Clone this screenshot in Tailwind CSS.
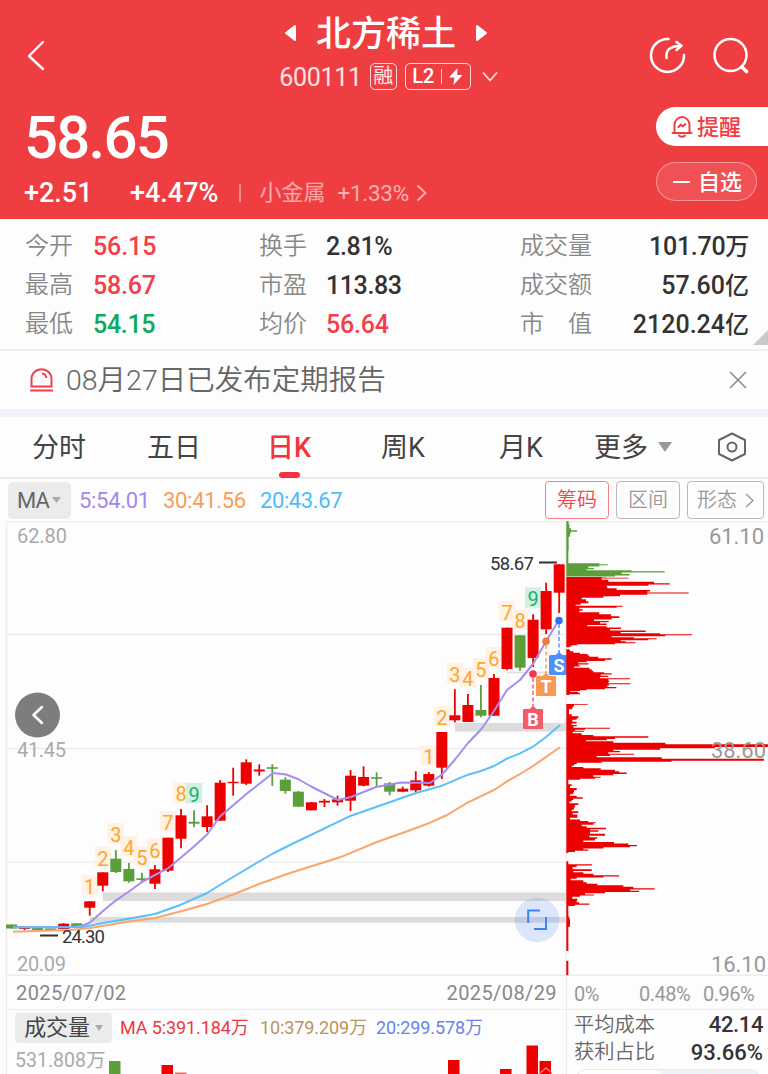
<!DOCTYPE html>
<html lang="zh-CN">
<head>
  <meta charset="utf-8" />
  <meta name="viewport" content="width=device-width, initial-scale=1" />
  <title>北方稀土 600111</title>
  <script src="https://cdn.jsdelivr.net/npm/@tailwindcss/browser@4"></script>
</head>
<body class="w-[768px] h-[1074px] overflow-hidden bg-[#fdfdfd] font-['Roboto','Noto_Sans_CJK_SC',sans-serif] text-[#333]">

  <!-- Header -->
  <header class="h-[219px] bg-[#ef3e41] text-white flex flex-col">
    <div class="h-[104px] flex">
      <div class="w-[220px] pl-[27px] pt-[40px]">
        <svg width="18" height="32" viewBox="0 0 18 32" fill="none" stroke="#fff" stroke-width="2.4" stroke-linecap="round" stroke-linejoin="round"><path d="M16 2 2 16l14 13"/></svg>
      </div>
      <div class="w-[332px] flex flex-col items-center">
        <div class="h-[66px] flex items-center gap-[19px]">
          <svg width="13" height="18" viewBox="0 0 13 18" fill="#fff" stroke="#fff" stroke-width="2" stroke-linejoin="round"><path d="M11 2v14L2 9z"/></svg>
          <h1 class="text-[35px] leading-none font-medium pt-[3px]">北方稀土</h1>
          <svg width="13" height="18" viewBox="0 0 13 18" fill="#fff" stroke="#fff" stroke-width="2" stroke-linejoin="round"><path d="M2 2v14l9-7z"/></svg>
        </div>
        <div class="h-[20px] flex items-center gap-2 ml-[5px]">
          <span class="text-[25px] leading-none text-white/85 tracking-[-0.3px] pt-[2px]">600111</span>
          <span class="w-[27px] h-[27px] border-[1.5px] border-white/80 rounded-[5px] flex items-center justify-center text-[20px] leading-none text-white/90">融</span>
          <span class="w-[66px] h-[27px] border-[1.5px] border-white/80 rounded-[5px] flex items-center justify-center gap-[7px] text-[20px] leading-none font-medium">L2
            <i class="w-px h-[15px] bg-white/70"></i>
            <svg width="14" height="17" viewBox="0 0 14 17" fill="#fff"><path d="M8.500 0 0 9.500h5.300L4.500 17 13.500 7H8.200z"/></svg>
          </span>
          <svg class="ml-[3px]" width="16" height="11" viewBox="0 0 16 11" fill="none" stroke="#fff" stroke-opacity=".85" stroke-width="1.600"><path d="m1 1.500 7 8 7-8"/></svg>
        </div>
      </div>
      <div class="flex-1 flex pt-[36px] pl-[97px] gap-[27px]">
        <svg width="37" height="38" viewBox="0 0 37 38" fill="none" stroke="#fff" stroke-width="2.500" stroke-linecap="round" stroke-linejoin="round"><path d="M19.500 3A16.500 16.500 0 1 0 35 19M17.500 22c-.8-8 3-11.500 13-12M27.500 6l5 3.800-5 4.200"/></svg>
        <svg width="38" height="39" viewBox="0 0 38 39" fill="none" stroke="#fff" stroke-width="2.500" stroke-linecap="round"><circle cx="17.500" cy="19" r="16"/><path d="m29 31 4.500 4.500" stroke-width="3.600"/></svg>
      </div>
    </div>
    <div class="flex-1 flex justify-between">
      <div class="pl-[24px]">
        <div class="mt-[3px] h-[62px] flex items-center text-[60px] leading-none font-medium tracking-[-1.800px]">58.65</div>
        <div class="mt-[9px] h-[30px] flex items-center text-[27px] leading-none font-medium">
          <span class="w-[106px]">+2.51</span>
          <span class="w-[109px]">+4.47%</span>
          <i class="w-[1.500px] h-[18px] bg-white/40 mr-[19px]"></i>
          <span class="text-[22px] font-normal text-white/55">小金属</span>
          <span class="text-[22.500px] ml-[12px] font-normal tracking-[-0.300px] text-white/60">+1.33%</span>
          <svg class="ml-[7px]" width="11" height="18" viewBox="0 0 11 18" fill="none" stroke="#fff" stroke-opacity=".6" stroke-width="1.800"><path d="m1.500 1.500 8 7.500-8 7.500"/></svg>
        </div>
      </div>
      <div class="w-[112px] pt-[3px] flex flex-col gap-[16px]">
        <div class="h-[39px] rounded-l-full bg-white text-[#f23c44] flex items-center pl-[15px] gap-[4px] text-[22px] leading-none font-medium">
          <svg width="22" height="23" viewBox="0 0 22 23" fill="none" stroke="#f23c44" stroke-width="1.900" stroke-linecap="round" stroke-linejoin="round"><path d="M3.500 17.500V10a7.500 8 0 0 1 15 0v7.500M1.500 18h19M8 20.500c1.500 1.700 4.500 1.700 6 0M7.500 12l2.500-2.500 1.500 2L14.500 9"/></svg>
          <span class="pt-[2px]">提醒</span>
        </div>
        <div class="w-[101px] h-[39px] rounded-full border-[1.500px] border-white/40 bg-white/10 flex items-center pl-[16px] gap-[8px] text-[22px] leading-none font-medium">
          <i class="w-[17px] h-[2px] bg-white"></i><span class="pt-[2px]">自选</span>
        </div>
      </div>
    </div>
  </header>

  <!-- Quote figures -->
  <section class="relative h-[132px] border-b-2 border-[#efeff0] pt-[8px] pl-[25px] pr-[19px] text-[24px] leading-none">
    <div class="grid grid-cols-[68px_166px_67px_194px_72px_1fr] auto-rows-[39px] items-center font-medium">
      <span class="font-[350] text-[#888] pb-[2px]">今开</span><span class="text-[25px] text-[#f63d49] tracking-[-0.100px]">56.15</span>
      <span class="font-[350] text-[#888] pb-[2px]">换手</span><span class="text-[25px] tracking-[-0.300px]">2.81%</span>
      <span class="font-[350] text-[#888] pb-[2px]">成交量</span><span class="text-[25px] text-right tracking-[-0.300px]">101.70<span class="text-[24px]">万</span></span>
      <span class="font-[350] text-[#888] pb-[2px]">最高</span><span class="text-[25px] text-[#f63d49] tracking-[-0.200px]">58.67</span>
      <span class="font-[350] text-[#888] pb-[2px]">市盈</span><span class="text-[25px] tracking-[-0.400px]">113.83</span>
      <span class="font-[350] text-[#888] pb-[2px]">成交额</span><span class="text-[25px] text-right">57.60<span class="text-[24px]">亿</span></span>
      <span class="font-[350] text-[#888] pb-[2px]">最低</span><span class="text-[25px] text-[#0aab5c] tracking-[-0.300px]">54.15</span>
      <span class="font-[350] text-[#888] pb-[2px]">均价</span><span class="text-[25px] text-[#f63d49] tracking-[-0.200px]">56.64</span>
      <span class="font-[350] text-[#888] pb-[2px] flex justify-between"><span>市</span><span>值</span></span><span class="text-[25px] text-right">2120.24<span class="text-[24px]">亿</span></span>
    </div>
    <svg class="absolute right-0 bottom-[4px]" width="15" height="15" viewBox="0 0 15 15" fill="#c9c9c9"><path d="M15 0v15H0z"/></svg>
  </section>

  <!-- Notice -->
  <section class="h-[66px] border-b-[8px] border-[#f1f2f8] flex items-center pl-[30px] pr-[21px]">
    <svg width="23" height="24" viewBox="0 0 23 24" fill="none" stroke="#f4404c" stroke-width="2"><path d="M1.500 18.500V11a10 9.800 0 0 1 20 0v7.500zM0 22.500h23M12 5.500c2.500.3 4 2 4.300 4.500"/></svg>
    <span class="ml-[13px] pt-[3px] text-[28.500px] leading-none text-[#666] font-[350]">08月27日已发布定期报告</span>
    <svg class="ml-auto" width="18" height="18" viewBox="0 0 18 18" stroke="#888" stroke-width="1.500"><path d="m1 1 16 16M17 1 1 17"/></svg>
  </section>

  <!-- Period tabs -->
  <nav class="h-[62px] border-b-2 border-[#ececee] flex items-center text-[27px] leading-none text-[#444]">
    <span class="w-[115px] pl-[32px] pt-[3px]">分时</span>
    <span class="w-[120px] pl-[32px] pt-[3px]">五日</span>
    <span class="w-[146px] pl-[32px] pt-[3px] relative font-medium text-[#f5333f]">日K<i class="absolute left-[44px] top-[40px] w-[21px] h-[6px] rounded-full bg-[#f5333f]"></i></span>
    <span class="w-[118px] pt-[3px]">周K</span>
    <span class="w-[95px] pt-[3px]">月K</span>
    <span class="pt-[3px]">更多</span>
    <svg class="ml-[10px]" width="14" height="10" viewBox="0 0 14 10" fill="#999"><path d="M0 0h14L7 10z"/></svg>
    <svg class="ml-[45px]" width="30" height="30" viewBox="0 0 30 30" fill="none" stroke="#666" stroke-width="2" stroke-linejoin="round"><path d="M15 1.500 28 8v14l-13 6.500L2 22V8z"/><circle cx="15" cy="15" r="4.500"/></svg>
  </nav>

  <!-- Indicator bar -->
  <div class="h-[42px] flex items-center pl-[8px] pr-[4px] text-[22px] leading-none">
    <span class="w-[63px] h-[37px] rounded-[5px] bg-[#ebebeb] text-[#666] flex items-center pl-[9px] gap-[2px]"><span class="w-[33px] pt-[2px] tracking-[-0.800px]">MA</span><svg width="9" height="6" viewBox="0 0 9 6" fill="#aaa"><path d="M0 0h9L4.500 6z"/></svg></span>
    <span class="w-[84px] ml-[8px] pt-[1px] text-[#a487ee] tracking-[-0.300px]">5:54.01</span>
    <span class="w-[97px] pt-[1px] text-[#f99d5c] tracking-[-0.300px]">30:41.56</span>
    <span class="text-[#4fbcf8] pt-[1px] tracking-[-0.400px]">20:43.67</span>
    <div class="ml-auto flex gap-[7px] text-[20px] font-[350]">
      <span class="w-[64px] h-[38px] rounded-[4px] border-[1.500px] border-[#f77f88] text-[#f5434f] flex items-center justify-center">筹码</span>
      <span class="w-[64px] h-[38px] rounded-[4px] border-[1.500px] border-[#bbb] text-[#999] flex items-center justify-center">区间</span>
      <span class="w-[77px] h-[38px] rounded-[4px] border-[1.500px] border-[#bbb] text-[#999] flex items-center justify-center gap-[8px]">形态<svg width="9" height="15" viewBox="0 0 9 15" fill="none" stroke="#999" stroke-width="1.500"><path d="m1 1 7 6.500L1 14"/></svg></span>
    </div>
  </div>

  <!-- K line chart and chip distribution -->
  <svg id="chart" class="block" width="768" height="455" viewBox="0 521 768 455">
    <g stroke="#ededee" stroke-width="1.500">
      <path d="M6 521.800H768M6 634.500H567M6 748.500H567M6 862H567M6 975.200H768M6.500 521V976M566 521V976"/>
      <path d="M507 672.500H566" stroke="#dedede"/>
    </g>
    <g fill="#dcdcdc">
      <rect x="455" y="723" width="111" height="8.500"/>
      <rect x="103" y="892.500" width="463" height="8.500"/>
      <rect x="90" y="917" width="476" height="5.800"/>
    </g>
    <g font-size="20" fill="#aaa">
      <text x="17" y="542.500" textLength="50">62.80</text>
      <text x="17" y="756.500" textLength="49">41.45</text>
      <text x="17" y="970.500" textLength="49">20.09</text>
    </g>
    <g id="counts" font-size="20" text-anchor="middle"></g>
    <g id="candles" stroke-width="1.800"></g>
    <g fill="none" stroke-width="2" stroke-linejoin="round">
      <path stroke="#f9a56c" d="M13 931.700 70 930 90 928 129 921.500 155 918 181 911.300 207 904 233 894.500 259 884 290 873 340 857.300 377 842 410 830.300 430 822.700 447 815 468 802.300 494 790 507 781.300 520 774 533 766 560 747.300"/>
      <path stroke="#a78bee" d="M13 927 70 927.300 83 925.500 90 922.500 103 911 116 900.300 129 891.500 142 882 155 875 168 868.300 181 857.500 194 846.500 207 834.500 220 816.500 247 793.500 273 773 286 774.500 298 779 312 787 338 800 351 797 376 787 401 782.500 430 783 442 774.500 455 759.500 468 743 481 729.500 494 711 507 690 520 680 533 664 546 641.500 559 620"/>
      <path stroke="#5bc0f8" d="M13 927.500 83 927 103 923 130 918.500 155 914 181 904.700 207 893 233 877 260 861 273 853.500 290 845 351 815.700 416 793 442 785.700 468 774.700 481 771 494 766 507 758.700 520 753.300 533 746.700 546 737 560 725"/>
    </g>
    <g font-size="18.500" fill="#333">
      <text x="490" y="569.500" textLength="44">58.67</text>
      <text x="62" y="943" textLength="43">24.30</text>
      <path d="M539 562.500h18M40 935.500h18" stroke="#333" stroke-width="1.800"/>
    </g>

    <!-- buy / T / sell markers -->
    <g stroke-width="1.500" stroke-dasharray="4 2.500">
      <path d="M533 678v30" stroke="#ef6471"/><path d="M546 645v30" stroke="#f9a05a"/><path d="M559 624v30" stroke="#5794fa"/>
    </g>
    <circle cx="533" cy="674" r="3.800" fill="#f0384a"/>
    <circle cx="546" cy="641.300" r="3.800" fill="#ef7b3f"/>
    <circle cx="559" cy="620.500" r="3.800" fill="#2d73f5"/>
    <g font-size="18" font-weight="700" text-anchor="middle">
      <path fill="#4d8ffb" d="M550 655h5.500l3.500-3 3.500 3h6.500v20h-19a1 1 0 0 1-1-1v-18z"/>
      <text x="559" y="671.500" fill="#fff">S</text>
      <path fill="#fb984f" d="M537 676h5.500l3.500-3 3.500 3h5.500a1 1 0 0 1 1 1v18a1 1 0 0 1-1 1h-18a1 1 0 0 1-1-1v-18z"/>
      <text x="546" y="692.500" fill="#fff">T</text>
      <path fill="#f45b68" d="M524 709h5.500l3.500-3 3.500 3h5.500a1 1 0 0 1 1 1v18a1 1 0 0 1-1 1h-18a1 1 0 0 1-1-1v-18z"/>
      <text x="533" y="725.500" fill="#fff">B</text>
    </g>

    <g transform="translate(560 520) scale(.33333)">
      <path id="chipGreen" fill="#5b9e3a"/>
      <path id="chipRed" fill="#ec0000"/>
    </g>
    <g font-size="22" fill="#999">
      <text x="709" y="543.500" textLength="55">61.10</text>
      <text x="711" y="757.500" textLength="55">38.60</text>
      <text x="711" y="972" textLength="55">16.10</text>
    </g>

    <circle cx="37.500" cy="715" r="22.500" fill="#7d7d7d"/>
    <path d="m42 707-8.500 8 8.500 8" fill="none" stroke="#fff" stroke-width="2.500" stroke-linecap="round" stroke-linejoin="round"/>
    <circle cx="537" cy="920" r="22.300" fill="#4a7df0" fill-opacity=".18"/>
    <path d="M528.200 923v-12.500H540M534 929h12v-12" fill="none" stroke="#3b82f6" stroke-width="2"/>
  </svg>

  <!-- Date axis -->
  <div class="h-[34px] flex ml-[6px] border-l border-b-[1.500px] border-[#ececec] leading-none">
    <div class="w-[560px] pl-[9px] pr-[9px] pt-[1px] flex items-center justify-between text-[20px] text-[#888] border-r-[1.500px] border-[#ececec]">
      <span class="tracking-[0.400px]">2025/07/02</span><span class="tracking-[0.400px]">2025/08/29</span>
    </div>
    <div class="flex-1 flex items-center pl-[7px] pt-[2px] text-[20px] text-[#999]">
      <span class="w-[65px] tracking-[-0.500px]">0%</span><span class="w-[64px] tracking-[-0.500px]">0.48%</span><span class="tracking-[-0.500px]">0.96%</span>
    </div>
  </div>

  <!-- Volume and chip cost -->
  <div class="h-[64px] flex ml-[6px] border-l border-[#ececec] leading-none">
    <div class="relative w-[560px] border-r-[1.500px] border-[#ececec] pt-[3px] pl-[8px]">
      <div class="flex items-center text-[18px] tracking-[-0.100px] whitespace-nowrap">
        <span class="w-[97px] h-[30px] rounded-[4px] bg-[#ebebeb] flex items-center justify-center gap-[5px] text-[22px] text-[#444]">成交量<svg width="8" height="6" viewBox="0 0 8 6" fill="#aaa"><path d="M0 0h8L4 6z"/></svg></span>
        <span class="w-[140px] ml-[8px] text-[#ea3a3e]">MA 5:391.184万</span>
        <span class="w-[116px] text-[#b8955c]">10:379.209万</span>
        <span class="text-[#6a83e8]">20:299.578万</span>
      </div>
      <div class="mt-[8px] text-[19.500px] text-[#aaa]">531.808万</div>
      <svg class="absolute left-0 top-0" width="560" height="64" viewBox="7 1010 560 64">
        <path fill="#5b9e3a" d="M109 1061h11.500v13H109z"/>
        <path fill="#ec0000" d="M161.500 1065H173v9h-11.500zM448 1060h11.500v14H448zM500 1069h11.500v5H500zM526.500 1045.500H538V1074h-11.500zM539.500 1061H551v13h-11.500z"/>
        <path fill="#f06a6a" d="M175 1072.500h11.500v1.500H175z"/>
        <path fill="none" stroke="#f77" stroke-width="1.500" d="m540 1073 6-5 6 5"/>
      </svg>
    </div>
    <div class="flex-1 relative pl-[7px] pr-[5px] pt-[1px] text-[20.300px] text-[#666]">
      <div class="h-[28px] flex items-center justify-between"><span class="font-[350]">平均成本</span><span class="text-[22px] font-medium text-[#333] tracking-[-0.400px]">42.14</span></div>
      <div class="h-[27px] flex items-center justify-between"><span class="font-[350]">获利占比</span><span class="text-[22px] font-medium text-[#333]">93.66%</span></div>
      <div class="mt-[3px] h-[5px] overflow-hidden"><div class="ml-[2px] mr-[3px] h-[24px] rounded-[10px] bg-[#eef3f9] border border-[#e3e9f1]"><div class="w-[86px] h-full rounded-[10px] bg-white"></div></div></div>
    </div>
  </div>

  <script>
    const RED = '#ec0000', GREEN = '#5b9e3a';
    const NS = 'http://www.w3.org/2000/svg';

    function add(parent, tag, attrs, text) {
      const el = document.createElementNS(NS, tag);
      for (const k in attrs) el.setAttribute(k, attrs[k]);
      if (text) el.textContent = text;
      parent.appendChild(el);
    }

    // colour, body top, body bottom, wick top, wick bottom
    const candles = [
      ['g',924.5,928.5,924.5,928.5],['r',927.5,929,927,930.3],['g',928,930,928,930],['g',928.5,930,928.5,930],
      ['r',923.7,929,923,929],['g',923.3,926,923.3,926],['r',901.3,907.7,901.3,915.7],['r',872.3,885.7,872.3,891.3],
      ['g',858.7,872,850,873],['g',869,881.3,863,882.7],['g',878.3,880,872.7,882],['r',869.3,883.7,865,889],
      ['r',837.7,870.7,837.7,872],['r',815.3,838.7,809,848.3],['g',821.8,823.7,810.3,827.3],['r',816.3,827,805.3,832],
      ['r',782.7,820.7,780,820.7],['r',781.8,783.2,767.7,795.7],['r',762.3,783.7,759.3,785],['r',769.5,771.5,764.3,775.7],
      ['g',767.2,768.8,764.3,786],['g',779.7,791,777.3,793.7],['g',791.7,806.7,791,807],['r',802.3,810.3,802.3,810.3],
      ['r',800.8,802.6,799,807],['r',799.3,802.3,795.7,805.7],['r',775.7,800.7,770,811],['r',777,785.7,766.3,786.3],
      ['g',777.2,778.8,772.3,786.7],['g',783.3,791.7,782,795.3],['r',788.7,791.7,786.7,792.3],['r',780.3,790.3,771.3,792.3],
      ['r',774,785.7,772,786.7],['r',732,767.7,732,779],['r',715.3,720.3,689.3,722.3],['r',705,722,694,722],
      ['g',710,715.7,685,717.3],['r',678,715.7,674,715.7],['r',627.7,669,627.7,670.3],['g',635.3,667.7,635.3,670.7],
      ['r',619.7,658,614.3,667],['r',591,629.3,582.7,634],['r',564.3,592.7,564.3,613]
    ];
    const xOf = i => 11.5 + i * 13.04;
    const candleLayer = document.getElementById('candles');
    candles.forEach(([c, top, bottom, hi, lo], i) => {
      const color = c === 'r' ? RED : GREEN, x = xOf(i);
      add(candleLayer, 'rect', { x: x - 5.5, y: top, width: 11, height: bottom - top, fill: color });
      add(candleLayer, 'path', { d: `M${x} ${hi}V${lo}`, stroke: color });
    });

    // nine-turn counts: first candle index, then the top of each tag
    const runs = [
      [6, [875, 846.5, 823, 836, 846, 838.5, 811, 782.3, 783]],
      [32, [745.3, 706, 662.7, 667.3, 658, 647, 601, 609.3, 587.3]]
    ];
    const countLayer = document.getElementById('counts');
    runs.forEach(([start, tops]) => tops.forEach((y, n) => {
      const x = xOf(start + n), last = n === 8;
      add(countLayer, 'rect', { x: x - 8.2, y, width: 16.4, height: 20.3, fill: last ? '#d3f0e2' : '#fff2e4' });
      add(countLayer, 'text', { x, y: y + 19, fill: last ? '#19b36b' : '#fba62f' }, String(n + 1));
    }));

    // chip distribution: y, x pairs in thirds of a pixel
    const green = [3,26,22,28,28,33,34,51,37,32,45,30,56,26,129,25,131,118,135,143,137,118,142,85,146,102,149,80,152,215,156,314,159,185,165,209,168,165,171,20];
    const red = [
      [171,140,172,125,174,206,177,125,182,145,188,282,192,329,195,265,199,140,203,142,207,170,213,270,216,262,219,386,222,262,227,180,231,130,235,65,240,78,247,85,252,62,256,47,259,188,262,170,265,58,270,68,275,58,279,118,286,153,292,178,296,155,301,102,305,146,308,120,313,140,317,82,320,140,325,183,329,150,334,257,338,182,342,300,344,396,347,316,350,155,353,222,356,290,359,265,362,182,365,197,368,226,371,165,374,52,378,35,381,28],
      [388,28,392,30,396,40,400,60,404,83,409,88,412,115,417,155,421,135,425,80,428,55,432,85,435,55,438,60,441,42,445,88,450,95,455,100,458,132,462,155,465,122,469,145,473,120,476,210,480,145,484,148,488,145,491,211,494,147,499,142,503,169,506,135,509,80,512,60,514,30,517,55,521,60,524,28],
      [552,83,556,42,560,40,565,36,570,27,580,27,586,35,592,55,597,50,602,37,608,50,613,35,617,50,621,40,625,150,628,75,631,45,634,72,637,38,643,65,647,100,651,265,655,165,659,140,662,78,666,160,670,316,675,624,679,624,683,465,687,300,691,160,695,180,699,145,703,222,706,150,710,110,714,305,718,612,721,612,724,335,727,125,730,50,735,42,739,35,743,70,747,122,752,165,755,178,760,200,764,160,768,100,772,122,775,105,778,60,781,25,790,25,796,35,800,30,808,50,813,42,820,40,825,30,829,50,834,68,838,40,842,35,847,28,853,55,857,45,867,42,871,35,877,55,881,38,886,52,891,52,896,30,901,60,905,85,908,107,912,100,917,65,921,80,926,138,929,90,933,115,938,90,945,135,950,88,954,112,959,105,964,70,968,162,973,205,977,231,980,210,984,130,987,70,990,85,994,45,998,25],
      [1024,25,1030,25,1035,96,1038,50,1044,38,1051,95,1055,40,1059,70,1064,100,1068,177,1071,130,1074,50,1078,32,1084,70,1089,80,1093,112,1098,190,1103,220,1107,284,1110,210,1114,237,1118,135,1122,75,1125,102,1128,60,1133,37,1139,52,1144,50,1149,57,1152,88,1156,45,1160,25,1188,25,1192,28,1202,30,1218,30,1222,25,1292,25],
      [1322,25,1365,25]
    ];
    function steps(a) {
      let d = `M19 ${a[0]}`;
      for (let i = 0; i < a.length; i += 2) {
        const end = i + 2 < a.length ? (a[i] + a[i + 2]) / 2 : a[i] + 1;
        // long gaps carry the previous row's width down to the next row
        d += `H${a[i + 1]}V${end}`;
      }
      return d + 'H19z';
    }
    document.getElementById('chipGreen').setAttribute('d', steps(green));
    document.getElementById('chipRed').setAttribute('d', red.map(steps).join(''));
  </script>
</body>
</html>
